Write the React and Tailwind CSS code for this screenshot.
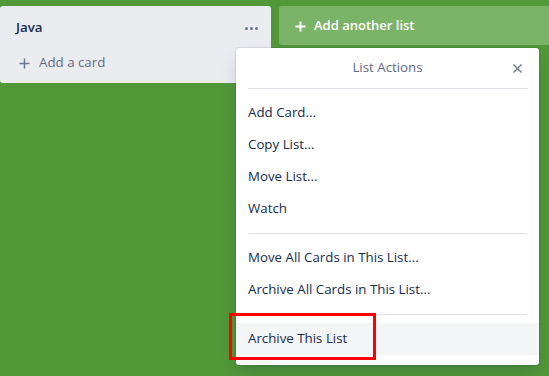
import React from "react";

function Item({ children, active }) {
  return (
    <div
      className={
        "h-8 flex items-center px-3 text-[13.3px] text-[#172b4d] " +
        (active ? "bg-[#f4f5f7]" : "")
      }
    >
      {children}
    </div>
  );
}

function Divider() {
  return <div className="h-px bg-[#dfe1e6] mx-3 my-2" />;
}

export default function App() {
  return (
    <div className="relative w-[549px] h-[376px] bg-[#519839] overflow-hidden font-['Open_Sans',sans-serif]">
      <div className="flex items-start gap-2 pt-[6px]">
        <div className="w-[271px] shrink-0 bg-[#ebecf0] rounded-[3px] h-[77px] flex flex-col pt-[1px]">
          <div className="flex items-center justify-between pl-4 pr-3 h-[42px]">
            <span className="text-[13.3px] font-semibold text-[#172b4d]">Java</span>
            <span className="flex gap-[2px] mr-[1px]">
              <span className="w-[3px] h-[3px] rounded-full bg-[#6b778c]" />
              <span className="w-[3px] h-[3px] rounded-full bg-[#6b778c]" />
              <span className="w-[3px] h-[3px] rounded-full bg-[#6b778c]" />
            </span>
          </div>
          <div className="flex items-center h-7 pl-[19px] gap-[9px] text-[13.3px] text-[#5e6c84]">
            <svg width="11" height="11" viewBox="0 0 11 11">
              <path d="M5.5 0.5v10M0.5 5.5h10" stroke="#6b778c" strokeWidth="1.5" />
            </svg>
            <span>Add a card</span>
          </div>
        </div>
        <div className="flex-1 h-[39px] bg-[#7bb468] rounded-l-[3px] flex items-center pl-[16px] pt-[1px] gap-2 text-white text-[13px] font-semibold">
          <svg width="11" height="11" viewBox="0 0 11 11">
            <path d="M5.5 0.5v10M0.5 5.5h10" stroke="#ffffff" strokeWidth="2" />
          </svg>
          <span>Add another list</span>
        </div>
      </div>

      <div className="absolute left-[236px] top-[48px] w-[303px] h-[317px] bg-white rounded-[3px] shadow-[0_8px_16px_-4px_rgba(9,30,66,0.25),0_0_0_1px_rgba(9,30,66,0.08)]">
        <div className="relative h-10 flex items-center justify-center text-[13.3px] text-[#5e6c84]">
          <span>List Actions</span>
          <svg
            className="absolute right-[17px] top-[16px]"
            width="9"
            height="9"
            viewBox="0 0 9 9"
          >
            <path d="M0.5 0.5l8 8M8.5 0.5l-8 8" stroke="#6b778c" strokeWidth="1.4" />
          </svg>
        </div>
        <div className="h-px bg-[#dfe1e6] ml-3 mr-[11px]" />
        <div className="pt-2">
          <Item>Add Card...</Item>
          <Item>Copy List...</Item>
          <Item>Move List...</Item>
          <Item>Watch</Item>
          <Divider />
          <Item>Move All Cards in This List...</Item>
          <Item>Archive All Cards in This List...</Item>
          <Divider />
          <Item active>Archive This List</Item>
        </div>
      </div>

      <div className="absolute left-[229px] top-[313px] w-[147px] h-[47px] border-[3px] border-[#ff0000]" />
    </div>
  );
}
